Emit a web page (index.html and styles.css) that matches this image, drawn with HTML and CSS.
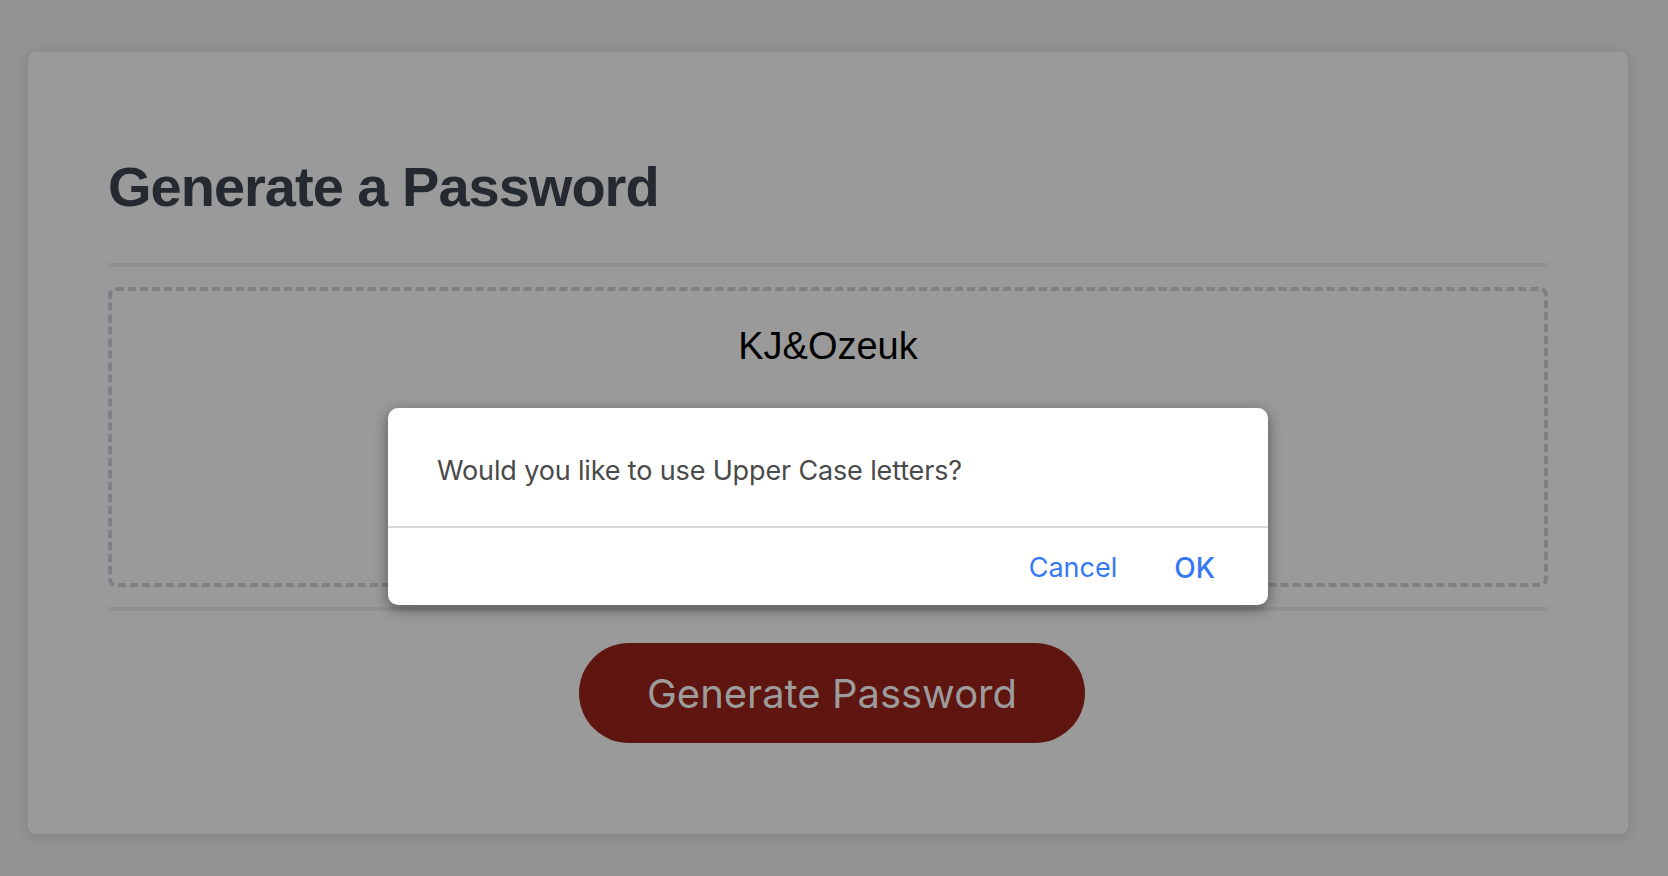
FILE: index.html
```html
<!DOCTYPE html>
<html lang="en">
<head>
<meta charset="utf-8">
<title>Password Generator</title>
<link rel="stylesheet" href="styles.css">
</head>
<body>
<div class="page">
  <main class="card">
    <header class="card-header">
      <h2 class="title">Generate a Password</h2>
    </header>
    <div class="card-body">
      <div class="password-box">
        <p class="password">KJ&amp;Ozeuk</p>
      </div>
    </div>
    <footer class="card-footer">
      <button class="generate-btn" type="button">Generate Password</button>
    </footer>
  </main>
</div>
<div class="dialog" role="dialog">
  <div class="dialog-message">Would you like to use Upper Case letters?</div>
  <div class="dialog-actions">
    <span class="dialog-btn">Cancel</span>
    <span class="dialog-btn dialog-btn-primary">OK</span>
  </div>
</div>
</body>
</html>
```
FILE: styles.css
```css
html, body {
  margin: 0;
  padding: 0;
}

body {
  background: #929395;
  font-family: "Liberation Sans", Arial, sans-serif;
  width: 1668px;
  height: 876px;
  overflow: hidden;
  position: relative;
}

.page {
  box-sizing: border-box;
  height: 876px;
  padding: 52px 40px 42px 28px;
}

.card {
  box-sizing: border-box;
  height: 782px;
  background: #9a9a9a;
  border-radius: 8px;
  box-shadow: 0 2px 14px rgba(0, 0, 0, 0.12);
  padding: 104px 80px 0 80px;
  display: flex;
  flex-direction: column;
}

.title {
  margin: 0;
  font-size: 56px;
  line-height: 62px;
  letter-spacing: -1px;
  font-weight: 700;
  color: #252a31;
}

.card-header {
  padding-bottom: 45px;
  border-bottom: 4px solid #8f8f8f;
}

.card-body {
  padding: 20px 0;
  border-bottom: 4px solid #8f8f8f;
}

.password-box {
  box-sizing: border-box;
  height: 300px;
  border: 4px dashed #7e8085;
  border-radius: 8px;
  padding-top: 33px;
  text-align: center;
}

.password {
  margin: 0;
  font-size: 38px;
  line-height: 44px;
  color: #000;
}

.card-footer {
  display: flex;
  justify-content: center;
  padding-top: 32px;
}

.generate-btn {
  width: 506px;
  height: 100px;
  margin-left: 8px;
  border: none;
  border-radius: 50px;
  background: #5f1510;
  color: #9c9c9c;
  font-family: Inter, "Noto Sans", sans-serif;
  font-size: 40px;
  font-weight: 400;
  padding: 0;
}

.dialog {
  position: absolute;
  left: 388px;
  top: 408px;
  width: 880px;
  height: 197px;
  background: #fff;
  border-radius: 10px;
  box-shadow: 0 4px 14px rgba(0, 0, 0, 0.45);
  font-family: Inter, "Noto Sans", sans-serif;
  overflow: hidden;
}

.dialog-message {
  box-sizing: border-box;
  height: 120px;
  padding: 46px 50px 0 49px;
  font-size: 27px;
  line-height: 33px;
  letter-spacing: -0.15px;
  color: #4a4a4a;
  border-bottom: 2px solid #d8d8d8;
}

.dialog-actions {
  display: flex;
  justify-content: flex-end;
  gap: 57px;
  padding: 23px 53px 0 0;
}

.dialog-btn {
  font-size: 27px;
  line-height: 34px;
  color: #3478f6;
}

.dialog-btn-primary {
  font-size: 28px;
  font-weight: 500;
}
```
